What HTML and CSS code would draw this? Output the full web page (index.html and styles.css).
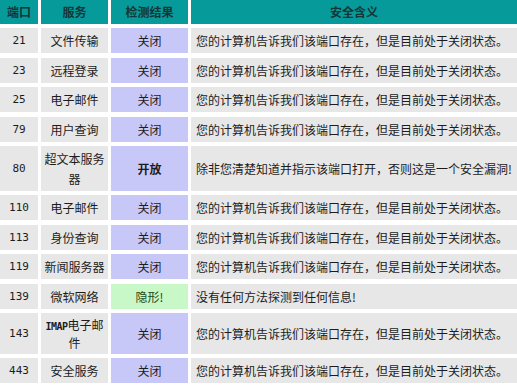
FILE: index.html
```html
<!DOCTYPE html>
<html lang="zh-CN">
<head>
<meta charset="utf-8">
<title>端口检测结果</title>
<link rel="stylesheet" href="styles.css">
</head>
<body>
<div class="ports">
  <div class="hd">端口</div>
  <div class="hd">服务</div>
  <div class="hd">检测结果</div>
  <div class="hd">安全含义</div>

  <div class="c num">21</div><div class="c">文件传输</div><div class="c res closed">关闭</div><div class="c msg">您的计算机告诉我们该端口存在，但是目前处于关闭状态。</div>
  <div class="c num">23</div><div class="c">远程登录</div><div class="c res closed">关闭</div><div class="c msg">您的计算机告诉我们该端口存在，但是目前处于关闭状态。</div>
  <div class="c num">25</div><div class="c">电子邮件</div><div class="c res closed">关闭</div><div class="c msg">您的计算机告诉我们该端口存在，但是目前处于关闭状态。</div>
  <div class="c num">79</div><div class="c">用户查询</div><div class="c res closed">关闭</div><div class="c msg">您的计算机告诉我们该端口存在，但是目前处于关闭状态。</div>
  <div class="c num">80</div><div class="c"><span class="svc"><span class="line">超文本服务</span><br>器</span></div><div class="c res closed open">开放</div><div class="c msg">除非您清楚知道并指示该端口打开，否则这是一个安全漏洞!</div>
  <div class="c num">110</div><div class="c">电子邮件</div><div class="c res closed">关闭</div><div class="c msg">您的计算机告诉我们该端口存在，但是目前处于关闭状态。</div>
  <div class="c num">113</div><div class="c">身份查询</div><div class="c res closed">关闭</div><div class="c msg">您的计算机告诉我们该端口存在，但是目前处于关闭状态。</div>
  <div class="c num">119</div><div class="c">新闻服务器</div><div class="c res closed">关闭</div><div class="c msg">您的计算机告诉我们该端口存在，但是目前处于关闭状态。</div>
  <div class="c num">139</div><div class="c">微软网络</div><div class="c res stealth">隐形!</div><div class="c msg">没有任何方法探测到任何信息!</div>
  <div class="c num">143</div><div class="c tight"><span class="svc"><span class="line"><span class="imap">IMAP</span>电子邮</span><br>件</span></div><div class="c res closed">关闭</div><div class="c msg">您的计算机告诉我们该端口存在，但是目前处于关闭状态。</div>
  <div class="c num">443</div><div class="c">安全服务</div><div class="c res closed">关闭</div><div class="c msg">您的计算机告诉我们该端口存在，但是目前处于关闭状态。</div>
</div>
</body>
</html>
```

FILE: styles.css
```css
html, body {
  margin: 0;
  padding: 0;
  background: #ffffff;
}

body {
  font-family: "Noto Sans CJK SC", "DejaVu Sans", sans-serif;
  font-size: 12px;
  color: #1c1c1c;
  overflow: hidden;
}

.ports {
  display: grid;
  grid-template-columns: 38px 67px 77px 1fr;
  gap: 4.4px 3px;
  width: 517px;
}

.hd {
  background: #079a9a;
  color: #143636;
  font-weight: bold;
  text-align: center;
  height: 24px;
  line-height: 24px;
}

.c {
  background: #e7e7e7;
  display: flex;
  align-items: center;
  justify-content: center;
  text-align: center;
  line-height: 20px;
  padding: 3px 2px 2px;
  min-height: 20px;
}

.c.tight {
  line-height: 18px;
}

.svc .line {
  white-space: nowrap;
}

.num {
  font-family: "DejaVu Sans Mono", monospace;
  font-size: 11px;
}

.res.closed {
  background: #c8c8f8;
}

.res.open {
  font-weight: bold;
}

.res.stealth {
  background: #c8f8c8;
  color: #1c4c1c;
}

.msg {
  justify-content: flex-start;
  text-align: left;
  padding-left: 5px;
}

.imap {
  font-family: "DejaVu Sans Mono", monospace;
  font-weight: bold;
  font-size: 10px;
  line-height: 10px;
  letter-spacing: -0.5px;
}
```
